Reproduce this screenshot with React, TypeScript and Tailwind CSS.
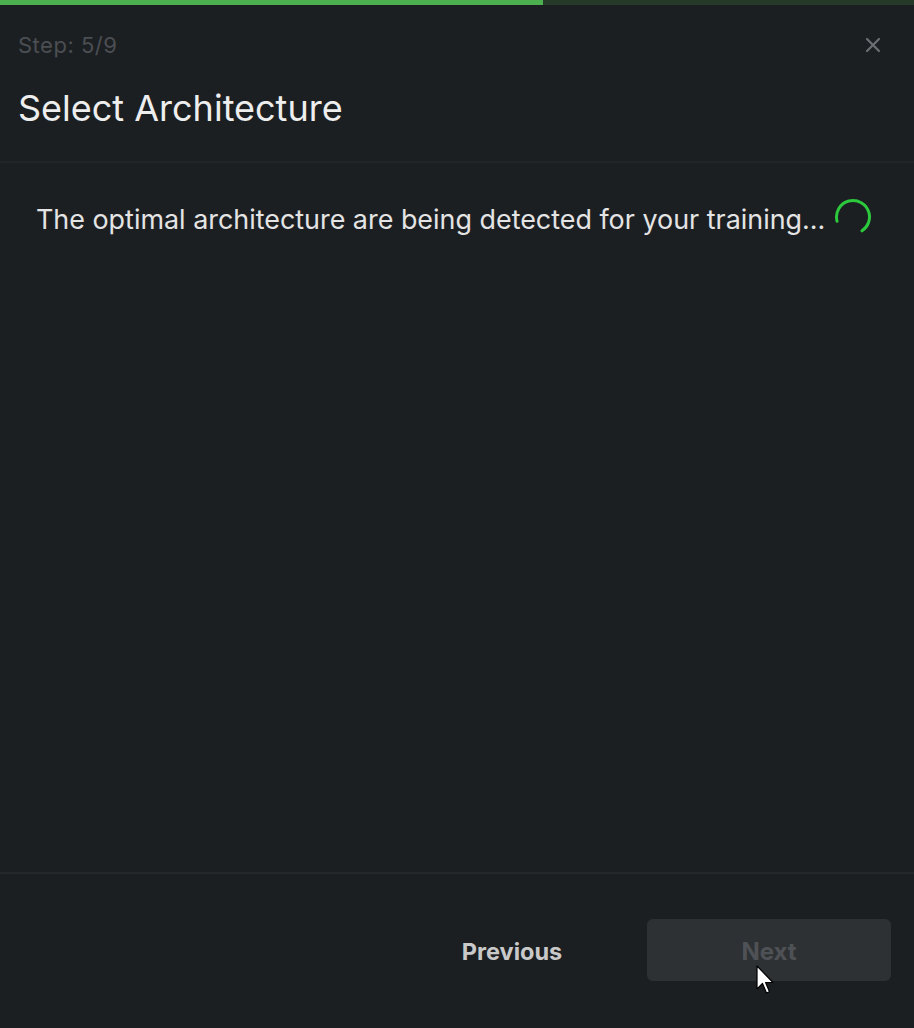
import React from "react";

export default function App() {
  return (
    <div
      className="relative flex h-[1028px] w-[914px] flex-col overflow-hidden bg-[#1c1f22]"
      style={{ fontFamily: "Inter, 'Noto Sans', sans-serif" }}
    >
      {/* progress */}
      <div className="flex h-[5px] w-full bg-[#253a29]">
        <div className="h-full w-[543px] bg-[#4caf50]" />
      </div>

      {/* header */}
      <div className="border-b-2 border-[#222528] px-[18px] pb-[32px] pt-[26px]">
        <div className="flex items-center justify-between">
          <span className="text-[22px] leading-[28px] tracking-[0.5px] text-[#4b4e52]">Step: 5/9</span>
          <svg width="16" height="16" viewBox="0 0 16 16" className="mr-[15px]">
            <path d="M2 2 L14 14 M14 2 L2 14" stroke="#6b6e72" strokeWidth="2.2" strokeLinecap="round" />
          </svg>
        </div>
        <h1 className="mt-[28px] text-[36px] leading-[42px] text-[#eeeeee]">Select Architecture</h1>
      </div>

      {/* body */}
      <div className="flex-1 px-[36px] pt-[39px]">
        <div className="flex items-center gap-[9px]">
          <span className="text-[26.9px] leading-[34px] text-[#e4e4e4]">
            The optimal architecture are being detected for your training...
          </span>
          <svg width="38" height="38" viewBox="0 0 38 38" className="-mt-[4px]">
            <circle
              cx="19"
              cy="19"
              r="16.5"
              fill="none"
              stroke="#2bc93b"
              strokeWidth="3"
              strokeLinecap="round"
              strokeDasharray="72 200"
              transform="rotate(165 19 19)"
            />
          </svg>
        </div>
      </div>

      {/* footer */}
      <div className="flex justify-end gap-[13px] border-t-2 border-[#25282b] px-[23px] pb-[47px] pt-[45px]">
        <button className="h-[62px] w-[244px] rounded-[6px] pt-[3px] text-[23.5px] font-bold text-[#c9c9c9]">
          Previous
        </button>
        <button className="h-[62px] w-[244px] rounded-[6px] bg-[#2e3134] pt-[3px] text-[24px] font-bold text-[#4e5155]">
          Next
        </button>
      </div>

      {/* mouse cursor */}
      <svg
        width="20"
        height="32"
        viewBox="0 0 20 32"
        className="absolute left-[756px] top-[965px]"
      >
        <path
          d="M1 1 L1 24 L6.5 18.5 L10.5 28 L13.5 26.8 L9.6 17.5 L17 17.5 Z"
          fill="#ffffff"
          stroke="#000000"
          strokeWidth="1.2"
          strokeLinejoin="round"
        />
      </svg>
    </div>
  );
}
